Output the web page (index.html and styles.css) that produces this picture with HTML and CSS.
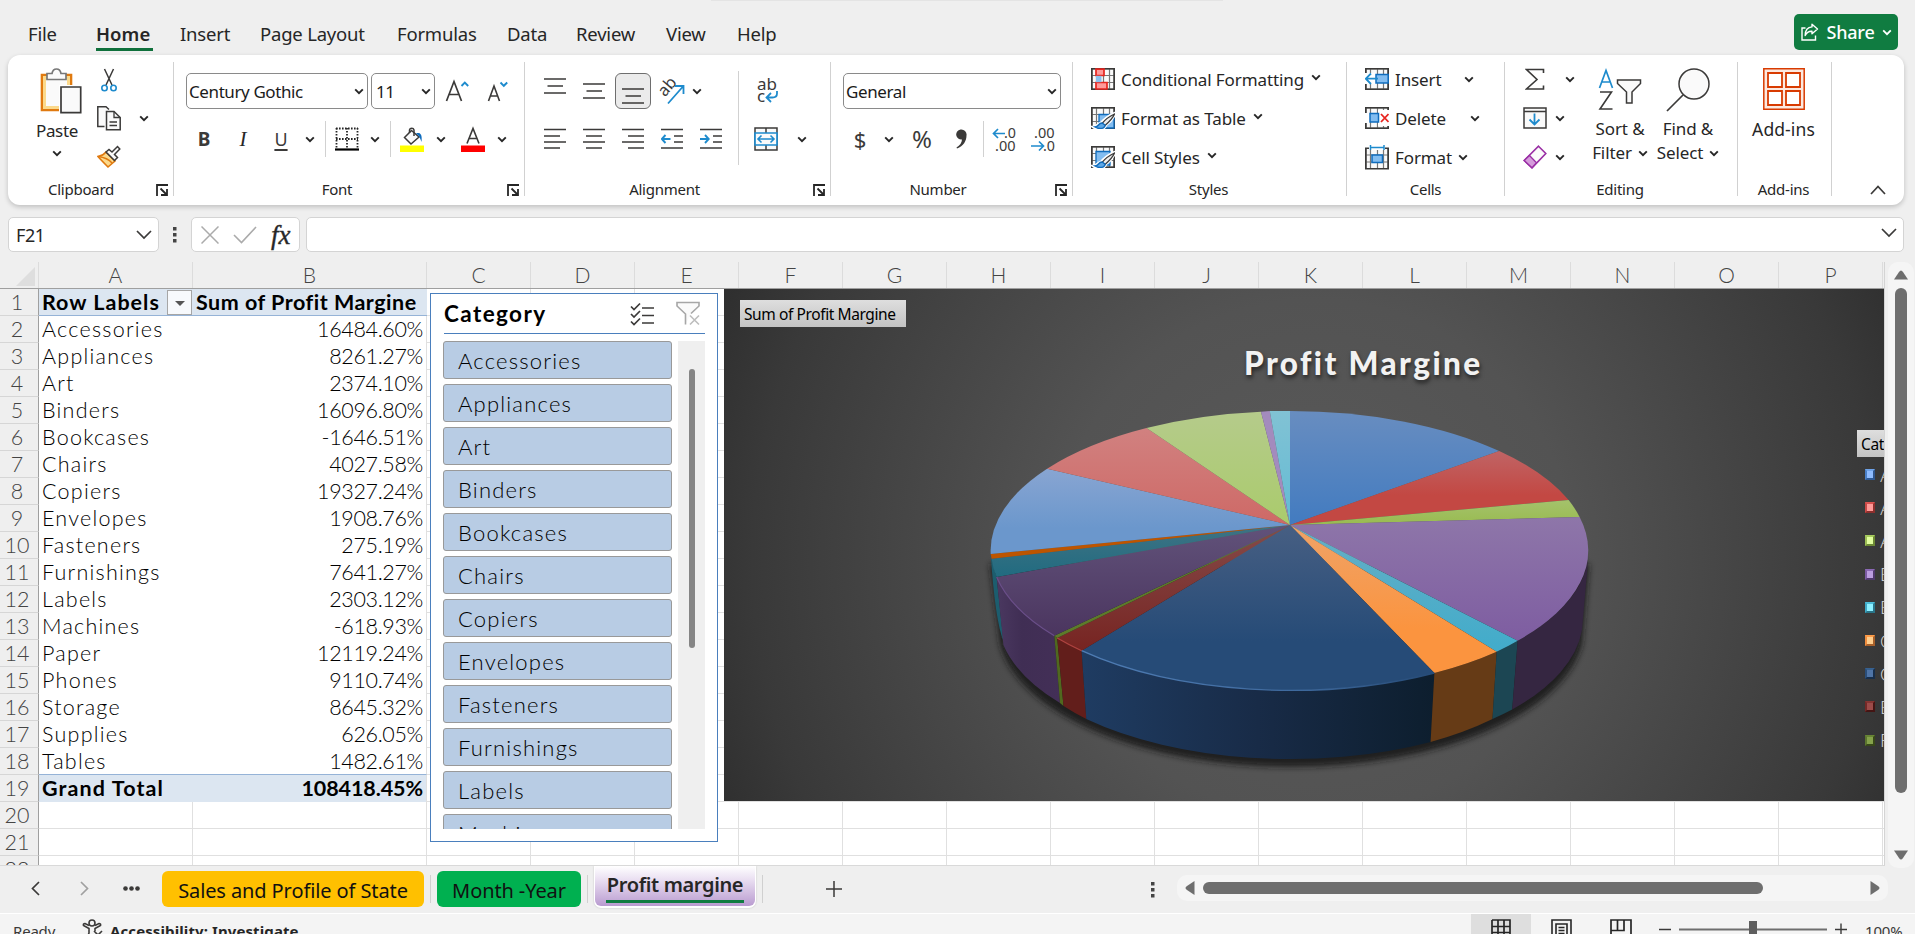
FILE: index.html
```html
<!DOCTYPE html>
<html lang="en">
<head>
<meta charset="utf-8">
<title>Profit margine</title>
<link rel="stylesheet" href="styles.css">
</head>
<body>
<svg class="defs" aria-hidden="true">
  <symbol id="chev" viewBox="0 0 10 7"><path d="M1.2 1.3 5 5.2 8.8 1.3" fill="none" stroke="#262626" stroke-width="1.9"/></symbol>
  <symbol id="launch" viewBox="0 0 12 12"><path d="M1 12V1H12M4.5 4.5l6 6M11 5v6H5" fill="none" stroke="#262626" stroke-width="1.8"/></symbol>
  <symbol id="grid" viewBox="0 0 24 22"><path d="M1 1H23V21H1ZM1 7.5H23M1 14.5H23M5.5 1V21M12.5 1V21M18.5 1V21" fill="#fafafa" stroke="#777" stroke-width="1.2"/><path d="M.8.8H23.2V21.2H.8Z" fill="none" stroke="#3b3a39" stroke-width="1.6"/></symbol>
  <symbol id="brush" viewBox="0 0 24 22"><path d="M24 6C18 8 12 13 10 16 7 16 6 20 2 20c4 3 12 3 13-2 4-3 8-8 9-12Z" fill="#fff" stroke="#fff" stroke-width="2.5"/><path d="M23.500 7C17 10 13 14 11 16.500l3 2C18 15 22 11 23.500 7Z" fill="#eee" stroke="#3b3a39" stroke-width="1.3"/><path d="M11 16c-4 0-3 4-7 4 4 2.500 10 2 10-2Z" fill="#5fa8e6" stroke="#0f6cbd" stroke-width="1.4"/></symbol>
</svg>

<div class="app">
  <header class="tabs">
    <nav class="tablist">
      <span class="tab t-file">File</span>
      <span class="tab t-home active">Home</span>
      <span class="tab t-insert">Insert</span>
      <span class="tab t-page">Page Layout</span>
      <span class="tab t-formulas">Formulas</span>
      <span class="tab t-data">Data</span>
      <span class="tab t-review">Review</span>
      <span class="tab t-view">View</span>
      <span class="tab t-help">Help</span>
    </nav>
    <div class="topline"></div>
    <button class="share">
      <svg width="18" height="18" viewBox="0 0 18 18" fill="none" stroke="#fff" stroke-width="1.4"><path d="M4.500 5H1V17H14.500V12.500"/><path d="M11 1.200 16.500 6 11 10.800V8.200C7.500 8 5.500 9.500 4.200 12.500 4.200 7.500 6.500 4.200 11 3.900Z" stroke-linejoin="round"/></svg>
      <span>Share</span>
      <svg width="10" height="7" viewBox="0 0 10 7"><path d="M1.200 1.300 5 5.200 8.800 1.300" fill="none" stroke="#fff" stroke-width="1.8"/></svg>
    </button>
  </header>

  <section class="ribbon">
    <div class="group g-clip">
      <div class="body clip">
        <div class="big paste">
          <svg width="42" height="46" viewBox="0 0 42 46"><path d="M2 7H31V42H2Z" fill="#fafafa" stroke="#e07a10" stroke-width="2.600"/><path d="M4.500 9.500H28.500V39.500H4.500Z" fill="none" stroke="#fbd98b" stroke-width="3"/><path d="M7 11.500V5.500H12C12.500 2.500 14 1 16.500 1S20.500 2.500 21 5.500H26V11.500Z" fill="#fafafa" stroke="#777" stroke-width="1.700"/><path d="M19 17H42V46H19Z" fill="#fff"/><path d="M21 19H40.700V44.700H21Z" fill="#fafafa" stroke="#3b3a39" stroke-width="1.700"/></svg>
          <span>Paste</span>
          <svg class="chev"><use href="#chev"/></svg>
        </div>
        <div class="col">
          <svg width="24" height="24" viewBox="0 0 24 24" fill="none"><path d="M7.500 1 15 17M16.500 1 9 17" stroke="#3b3a39" stroke-width="1.500"/><circle cx="7.500" cy="20" r="2.700" stroke="#1e8bcd" stroke-width="1.600"/><circle cx="16.500" cy="20" r="2.700" stroke="#1e8bcd" stroke-width="1.600"/></svg>
          <div class="copyrow">
            <svg width="24" height="25" viewBox="0 0 24 25" fill="#fafafa" stroke="#3b3a39" stroke-width="1.500"><path d="M7.500 20.500H.8V.8H9L12 3.500"/><path d="M9.500 5.500H17L23.200 11.500V23.700H9.500Z"/><path d="M17 5.500V11.500H23.200M12.500 16H20M12.500 19.500H20" fill="none" stroke-width="1.300"/></svg>
            <svg class="chev"><use href="#chev"/></svg>
          </div>
          <svg width="24" height="24" viewBox="0 0 24 24"><path d="M9 7 18 16 11 22C8 19 4 15 1 11.500 4 11 7 9.500 9 7Z" fill="#fbd98b" stroke="#e07a10" stroke-width="1.600"/><path d="M1 11.500C5 12 11 13 15 18" fill="none" stroke="#e07a10" stroke-width="1.400"/><path d="M9 7 12 4.500 15 7 20.500 1.500 22.800 4 17.500 9.500 20.500 12.500 17.500 15.500Z" fill="#fafafa" stroke="#3b3a39" stroke-width="1.500"/></svg>
        </div>
      </div>
      <div class="label"><span>Clipboard</span><svg class="launch"><use href="#launch"/></svg></div>
    </div>
    <i class="vsep"></i>

    <div class="group g-font">
      <div class="body rows">
        <div class="row fontrow">
          <div class="combo fontname"><span>Century Gothic</span><svg class="chev"><use href="#chev"/></svg></div>
          <div class="combo fontsize"><span>11</span><svg class="chev"><use href="#chev"/></svg></div>
          <svg class="grow" width="24" height="24" viewBox="0 0 24 24" fill="none"><path d="M1.500 22 9 2.500 16.500 22M4.200 15.500H13.800" stroke="#3b3a39" stroke-width="1.700"/><path d="M16.500 7 19.800 3.600 23.200 7" stroke="#1e8bcd" stroke-width="1.900"/></svg>
          <svg class="shrink" width="21" height="24" viewBox="0 0 21 24" fill="none"><path d="M1.500 22 7 7 12.500 22M3.500 17H10.500" stroke="#3b3a39" stroke-width="1.600"/><path d="M13.500 3.500 16.800 6.800 20.200 3.500" stroke="#1e8bcd" stroke-width="1.900"/></svg>
        </div>
        <div class="row slots s-font">
          <b class="fb">B</b><i class="fi">I</i><u class="fu">U</u><svg class="chev"><use href="#chev"/></svg>
          <span class="rsep"></span>
          <svg width="24" height="24" viewBox="0 0 24 24" fill="none" stroke="#262626"><path d="M1 1.500H23M1 12H23" stroke-width="1.800" stroke-dasharray="1.600 1.400"/><path d="M1.500 1V21M12 1V21M22.500 1V21" stroke-width="1.800" stroke-dasharray="1.600 1.400"/><path d="M0 22.500H24" stroke="#000" stroke-width="2.200"/></svg>
          <svg class="chev"><use href="#chev"/></svg><span class="rsep"></span>
          <svg width="24" height="26" viewBox="0 0 24 26"><path d="M11.500 4.500 19 11 11 18 4.500 11.500Z" fill="#fafafa" stroke="#3b3a39" stroke-width="1.500"/><path d="M9.500 7V4A2.300 2.300 0 0 1 14 4V10" fill="none" stroke="#3b3a39" stroke-width="1.500"/><path d="M16 7.500C20 6 22.500 8 21.500 16 20 12 19.500 10 16 7.500Z" fill="#0f6cbd"/><path d="M0 19.500H24V26H0Z" fill="#ff0"/></svg>
          <svg class="chev"><use href="#chev"/></svg>
          <svg width="24" height="26" viewBox="0 0 24 26"><path d="M6 17.500 12 2.500 18 17.500M8.200 12.500H15.800" fill="none" stroke="#3b3a39" stroke-width="1.600"/><path d="M0 19.500H24V26H0Z" fill="#f00"/></svg>
          <svg class="chev"><use href="#chev"/></svg>
        </div>
      </div>
      <div class="label"><span>Font</span><svg class="launch"><use href="#launch"/></svg></div>
    </div>
    <i class="vsep"></i>

    <div class="group g-align">
      <div class="body alignbody">
        <div class="rows">
          <div class="row slots s-align">
            <svg class="ln up" width="22" height="22" viewBox="0 0 22 22"><path d="M0 4H22M3.500 11H19M0 18H22"/></svg>
            <svg class="ln" width="22" height="22" viewBox="0 0 22 22"><path d="M0 4H22M3.500 11H19M0 18H22"/></svg>
            <span class="pressed"><svg class="ln" width="22" height="22" viewBox="0 0 22 22"><path d="M0 4H22M3.500 11H19M0 18H22"/></svg></span>
            <svg class="orient" width="26" height="28" viewBox="0 0 26 28"><text class="ic" transform="translate(6 20.500) rotate(-50)" font-size="16.500">ab</text><path d="M9 26.500 24 9.500M16 9H24.500V17" fill="none" stroke="#1e8bcd" stroke-width="1.800"/></svg>
            <svg class="chev"><use href="#chev"/></svg>
          </div>
          <div class="row slots s-align2">
            <svg class="ln" width="22" height="22" viewBox="0 0 22 22"><path d="M0 1.500H22M0 8H16M0 14H22M0 20H16"/></svg>
            <svg class="ln" width="22" height="22" viewBox="0 0 22 22"><path d="M0 1.500H22M3 8H19M0 14H22M3 20H19"/></svg>
            <svg class="ln" width="22" height="22" viewBox="0 0 22 22"><path d="M0 1.500H22M6 8H22M0 14H22M6 20H22"/></svg>
            <svg class="ln" width="22" height="22" viewBox="0 0 22 22"><path d="M0 1.500H22M13 8H22M13 14H22M0 20H22"/><path class="bl" d="M9.500 11H1M4.500 7 .8 11 4.500 15"/></svg>
            <svg class="ln" width="22" height="22" viewBox="0 0 22 22"><path d="M0 1.500H22M13 8H22M13 14H22M0 20H22"/><path class="bl" d="M0 11H8.500M5 7 8.700 11 5 15"/></svg>
          </div>
        </div>
        <i class="midsep"></i>
        <div class="rows wrapcol">
          <div class="row"><svg class="wrap" width="22" height="28" viewBox="0 0 22 28"><text class="ic" x="0" y="13" font-size="17">ab</text><text class="ic" x="0" y="25" font-size="17">c</text><path d="M20 14V16.500Q20 20.500 15.500 20.500H9.500M14 16 9.500 20.500 14 25" fill="none" stroke="#1e8bcd" stroke-width="1.800"/></svg></div>
          <div class="row"><svg width="24" height="24" viewBox="0 0 24 24"><path d="M1 1H23V23H1ZM12 1V6M12 18V23" fill="#fafafa" stroke="#3b3a39" stroke-width="1.500"/><path d="M1 6H23V18H1Z" fill="#fafafa" stroke="#1e8bcd" stroke-width="1.700"/><path d="M4 12H20M7.500 8.500 4 12 7.500 15.500M16.500 8.500 20 12 16.500 15.500" fill="none" stroke="#1e8bcd" stroke-width="1.600"/></svg><svg class="chev mergechev"><use href="#chev"/></svg></div>
        </div>
      </div>
      <div class="label"><span>Alignment</span><svg class="launch"><use href="#launch"/></svg></div>
    </div>
    <i class="vsep"></i>

    <div class="group g-num">
      <div class="body rows">
        <div class="row numrow"><div class="combo general"><span>General</span><svg class="chev"><use href="#chev"/></svg></div></div>
        <div class="row slots s-num">
          <span class="dollar">$</span><svg class="chev"><use href="#chev"/></svg><span class="pct">%</span>
          <svg width="12" height="20" viewBox="0 0 12 20"><path d="M5.500.5A5.200 5.200 0 0 1 11.500 6.500C11.500 12 8.500 17 2 19.500L1.500 18.500C5 16.500 6.800 13.500 7 10.500A5 5 0 1 1 5.500.5Z" fill="#3b3a39"/></svg>
          <span class="rsep"></span>
          <svg width="24" height="28" viewBox="0 0 24 28"><text class="ic" x="12" y="13" font-size="15" textLength="12" lengthAdjust="spacingAndGlyphs">.0</text><text class="ic" x="3" y="26" font-size="15" textLength="20.500" lengthAdjust="spacingAndGlyphs">.00</text><path d="M13 8.500H1.500M6 4 1.500 8.500 6 13" fill="none" stroke="#1e8bcd" stroke-width="1.700"/></svg>
          <svg width="24" height="28" viewBox="0 0 24 28"><text class="ic" x="3" y="13" font-size="15" textLength="20.500" lengthAdjust="spacingAndGlyphs">.00</text><text class="ic" x="12" y="26" font-size="15" textLength="12" lengthAdjust="spacingAndGlyphs">.0</text><path d="M0 21H12.500M8 16.500 12.500 21 8 25.500" fill="none" stroke="#1e8bcd" stroke-width="1.700"/></svg>
        </div>
      </div>
      <div class="label"><span>Number</span><svg class="launch"><use href="#launch"/></svg></div>
    </div>
    <i class="vsep"></i>

    <div class="group g-styles">
      <div class="body cmds">
        <div class="cmd"><svg width="24" height="22"><use href="#grid"/><path d="M5 1.200H13V7.500H5ZM5 14.500H16V21H5Z" fill="#ff9a9a" stroke="#e8251f" stroke-width="1.700"/><path d="M5 7.800H10.500V14.200H5Z" fill="#8cc1ee"/></svg><span>Conditional Formatting</span><svg class="chev"><use href="#chev"/></svg></div>
        <div class="cmd"><svg width="24" height="22"><use href="#grid"/><path d="M8 7.500H23V21H8Z" fill="#83bdf0" stroke="#0f6cbd" stroke-width="1.300"/><use href="#brush"/></svg><span>Format as Table</span><svg class="chev"><use href="#chev"/></svg></div>
        <div class="cmd"><svg width="24" height="22"><use href="#grid"/><path d="M5 5.500H19V19H5Z" fill="#83bdf0" stroke="#0f6cbd" stroke-width="1.300"/><use href="#brush"/></svg><span>Cell Styles</span><svg class="chev"><use href="#chev"/></svg></div>
      </div>
      <div class="label"><span>Styles</span></div>
    </div>
    <i class="vsep"></i>

    <div class="group g-cells">
      <div class="body cmds">
        <div class="cmd"><svg width="24" height="22"><use href="#grid"/><path d="M0 5H11V16H0Z" fill="#fff"/><path d="M11 6.500H23.200V15H11Z" fill="#83bdf0" stroke="#0f6cbd" stroke-width="1.500"/><path d="M13 10.700H1M6 5.500.8 10.700 6 16" fill="none" stroke="#1e8bcd" stroke-width="1.800"/></svg><span class="w-ins">Insert</span><svg class="chev"><use href="#chev"/></svg></div>
        <div class="cmd"><svg width="24" height="22"><use href="#grid"/><path d="M0 6H5V16H0ZM13 3H24V19H13Z" fill="#fff"/><path d="M5 6.500H13.500V15H5Z" fill="#83bdf0" stroke="#0f6cbd" stroke-width="1.500"/><path d="M16 7 23.500 15M23.500 7 16 15" fill="none" stroke="#e8251f" stroke-width="1.800"/></svg><span class="w-del">Delete</span><svg class="chev"><use href="#chev"/></svg></div>
        <div class="cmd"><svg width="24" height="25" viewBox="0 0 24 25"><use href="#grid" y="2" width="24" height="23"/><path d="M4 0H20V5H4Z" fill="#fff"/><path d="M7 10H17.500V17.500H7Z" fill="#83bdf0" stroke="#0f6cbd" stroke-width="1.500"/><path d="M5.500 0V5M19 0V5M5.500 2.500H19" stroke="#1e8bcd" stroke-width="1.500"/></svg><span>Format</span><svg class="chev"><use href="#chev"/></svg></div>
      </div>
      <div class="label"><span>Cells</span></div>
    </div>
    <i class="vsep"></i>

    <div class="group g-edit">
      <div class="body editbody">
        <div class="cmds edits">
          <div class="cmd sum"><svg width="20" height="23" viewBox="0 0 20 23"><path d="M18.500 5V1.500H1.500L12 11.500 1.500 21H18.500V17.500" fill="none" stroke="#3b3a39" stroke-width="1.600"/></svg><svg class="chev"><use href="#chev"/></svg></div>
          <div class="cmd"><svg width="24" height="22" viewBox="0 0 24 22"><path d="M1 1H23V21H1ZM1 4.500H23" fill="#fafafa" stroke="#3b3a39" stroke-width="1.500"/><path d="M11.500 6.500V17M6.500 12.500 11.500 17.500 16.500 12.500" fill="none" stroke="#1e8bcd" stroke-width="1.800"/></svg><svg class="chev"><use href="#chev"/></svg></div>
          <div class="cmd"><svg width="24" height="24" viewBox="0 0 24 24"><path d="M15.500 1.200 22.800 8.500 9 22.800 1.200 15.500Z" fill="#fafafa" stroke="#9a2fa5" stroke-width="1.600"/><path d="M6.500 10.500 13.500 17.800 9 22.800 1.200 15.500Z" fill="#d59bdb" stroke="#9a2fa5" stroke-width="1.300"/></svg><svg class="chev"><use href="#chev"/></svg></div>
        </div>
        <div class="big sort">
          <svg width="44" height="44" viewBox="0 0 44 44"><path d="M1.500 20 8 2.500 14.500 20M3.800 14H12.200" fill="none" stroke="#1e8bcd" stroke-width="1.700"/><path d="M2 24H13.500L2 41H14.500" fill="none" stroke="#3b3a39" stroke-width="1.600"/><path d="M19.500 12H42.500V15.500L34 24V35H28.500V24L19.500 15.500Z" fill="#fafafa" stroke="#3b3a39" stroke-width="1.500"/></svg>
          <span>Sort &amp;</span>
          <span class="lo">Filter <svg class="chev"><use href="#chev"/></svg></span>
        </div>
        <div class="big find">
          <svg width="44" height="44" viewBox="0 0 44 44"><circle cx="28" cy="16" r="15" fill="#fafafa" stroke="#3b3a39" stroke-width="1.500"/><path d="M17 27 1 43" stroke="#3b3a39" stroke-width="1.700"/></svg>
          <span>Find &amp;</span>
          <span class="lo">Select <svg class="chev"><use href="#chev"/></svg></span>
        </div>
      </div>
      <div class="label"><span>Editing</span></div>
    </div>
    <i class="vsep"></i>

    <div class="group g-add">
      <div class="body">
        <div class="big addins">
          <svg width="42" height="42" viewBox="0 0 42 42" fill="none" stroke="#d83b01" stroke-width="1.500"><path d="M.8.8H41.200V41.200H.8Z" fill="#fce9e0"/><path d="M5 5H19V19H5ZM23 5H37V19H23ZM5 23H19V37H5ZM23 23H37V37H23Z" fill="#fff" stroke-width="1.800"/></svg>
          <span>Add-ins</span>
        </div>
      </div>
      <div class="label"><span>Add-ins</span></div>
    </div>
    <i class="vsep"></i>
    <svg class="collapse" width="16" height="10" viewBox="0 0 16 10"><path d="M1 9 8 1.500 15 9" fill="none" stroke="#3b3a39" stroke-width="1.700"/></svg>
  </section>

  <section class="formula">
    <div class="namebox"><span>F21</span><svg width="16" height="10" viewBox="0 0 16 10"><path d="M1 1 8 8 15 1" fill="none" stroke="#3b3a39" stroke-width="1.700"/></svg></div>
    <svg class="dots" width="4" height="16" viewBox="0 0 4 16"><path d="M0 0H3.500V3.500H0ZM0 6H3.500V9.500H0ZM0 12H3.500V15.500H0Z" fill="#444"/></svg>
    <div class="fxbox">
      <svg width="18" height="18" viewBox="0 0 18 18"><path d="M.5.5 17.500 17.500M17.500.5.5 17.500" stroke="#ababab" stroke-width="1.500"/></svg>
      <svg width="24" height="18" viewBox="0 0 24 18"><path d="M1 9 8.500 16.500 23 1" fill="none" stroke="#ababab" stroke-width="1.600"/></svg>
      <span class="fx">fx</span>
    </div>
    <div class="input"><svg width="16" height="10" viewBox="0 0 16 10"><path d="M1 1 8 8 15 1" fill="none" stroke="#3b3a39" stroke-width="1.700"/></svg></div>
  </section>

  <main class="sheetwrap">
    <div class="sheet">
      <div class="heads">
        <span class="corner"><svg width="19" height="19" viewBox="0 0 19 19"><path d="M19 0V19H0Z" fill="#dedede"/></svg></span>
        <span>A</span><span>B</span><span>C</span><span>D</span><span>E</span><span>F</span><span>G</span><span>H</span><span>I</span><span>J</span><span>K</span><span>L</span><span>M</span><span>N</span><span>O</span><span>P</span>
      </div>
      <div class="gridarea">
        <div class="pivot">
          <div class="pr hd"><i>1</i><span class="rl">Row Labels<em class="drop"></em></span><span class="sm">Sum of Profit Margine</span></div>
          <div class="pr"><i>2</i><span>Accessories</span><span>16484.60%</span></div>
          <div class="pr"><i>3</i><span>Appliances</span><span>8261.27%</span></div>
          <div class="pr"><i>4</i><span>Art</span><span>2374.10%</span></div>
          <div class="pr"><i>5</i><span>Binders</span><span>16096.80%</span></div>
          <div class="pr"><i>6</i><span>Bookcases</span><span>-1646.51%</span></div>
          <div class="pr"><i>7</i><span>Chairs</span><span>4027.58%</span></div>
          <div class="pr"><i>8</i><span>Copiers</span><span>19327.24%</span></div>
          <div class="pr"><i>9</i><span>Envelopes</span><span>1908.76%</span></div>
          <div class="pr"><i>10</i><span>Fasteners</span><span>275.19%</span></div>
          <div class="pr"><i>11</i><span>Furnishings</span><span>7641.27%</span></div>
          <div class="pr"><i>12</i><span>Labels</span><span>2303.12%</span></div>
          <div class="pr"><i>13</i><span>Machines</span><span>-618.93%</span></div>
          <div class="pr"><i>14</i><span>Paper</span><span>12119.24%</span></div>
          <div class="pr"><i>15</i><span>Phones</span><span>9110.74%</span></div>
          <div class="pr"><i>16</i><span>Storage</span><span>8645.32%</span></div>
          <div class="pr"><i>17</i><span>Supplies</span><span>626.05%</span></div>
          <div class="pr last"><i>18</i><span>Tables</span><span>1482.61%</span></div>
          <div class="pr tot"><i>19</i><span>Grand Total</span><span>108418.45%</span></div>
          <div class="pr blank"><i>20</i><span></span><span></span></div>
          <div class="pr blank"><i>21</i><span></span><span></span></div>
          <div class="pr blank"><i>22</i><span></span><span></span></div>
        </div>
        <div class="cells"></div>

        <div class="slicer">
          <div class="shead"><span>Category</span>
            <svg class="multi" width="24" height="24" viewBox="0 0 24 24" fill="none"><path d="M1 4.500 4 7.500 10 1.500M1 12 4 15 10 9M1 19.500 4 22.500 10 16.500" stroke="#3b3a39" stroke-width="1.700"/><path d="M12 6H24M12 13.500H24M12 21H24" stroke="#3b3a39" stroke-width="1.700"/></svg>
            <svg width="24" height="25" viewBox="0 0 24 25" fill="none"><path d="M9.500 23.500V13L1 5V1.500H23V5L15 12.500" fill="#fafafa" stroke="#a6a6a6" stroke-width="1.600"/><path d="M14 14.500 23 23.500M23 14.500 14 23.500" stroke="#bdbdbd" stroke-width="1.600"/></svg>
          </div>
          <div class="sbody">
            <div class="items">
              <div>Accessories</div><div>Appliances</div><div>Art</div><div>Binders</div><div>Bookcases</div><div>Chairs</div><div>Copiers</div><div>Envelopes</div><div>Fasteners</div><div>Furnishings</div><div>Labels</div><div>Machines</div>
            </div>
            <div class="strack"><div class="sthumb"></div></div>
          </div>
        </div>

        <div class="chart">
          <span class="field">Sum of Profit Margine</span>
          <div class="ctitle">Profit Margine</div>
          <svg class="pie" width="640" height="400" viewBox="970 390 640 400">
            <defs>
              <filter id="soft" x="-10%" y="-10%" width="120%" height="120%"><feGaussianBlur stdDeviation="3"/></filter>
              <linearGradient id="c1" x2="0" y2="1"><stop stop-color="#688dc0"/><stop offset="1" stop-color="#427bc0"/></linearGradient>
              <linearGradient id="c2" x2="0" y2="1"><stop stop-color="#c06465"/><stop offset=".6" stop-color="#c34843"/><stop offset="1" stop-color="#c34843"/></linearGradient>
              <linearGradient id="c3" x2="0" y2="1"><stop stop-color="#a4c26c"/><stop offset="1" stop-color="#99bb50"/></linearGradient>
              <linearGradient id="c4" x2="0" y2="1"><stop stop-color="#8e76a9"/><stop offset="1" stop-color="#7e5da1"/></linearGradient>
              <linearGradient id="c5" x2="0" y2="1"><stop stop-color="#66aec4"/><stop offset="1" stop-color="#41accb"/></linearGradient>
              <linearGradient id="c6" x2="0" y2="1"><stop stop-color="#efa368"/><stop offset=".7" stop-color="#fb943f"/><stop offset="1" stop-color="#fb943f"/></linearGradient>
              <linearGradient id="c7" x2="0" y2="1"><stop stop-color="#475f83"/><stop offset=".7" stop-color="#264b77"/><stop offset="1" stop-color="#264b77"/></linearGradient>
              <linearGradient id="c8" x2="0" y2="1"><stop stop-color="#854b4a"/><stop offset="1" stop-color="#772421"/></linearGradient>
              <linearGradient id="c10" x2="0" y2="1"><stop stop-color="#61527a"/><stop offset="1" stop-color="#4b355f"/></linearGradient>
              <linearGradient id="c11" x2="0" y2="1"><stop stop-color="#3f7384"/><stop offset="1" stop-color="#216b80"/></linearGradient>
              <linearGradient id="c13" x2="0" y2="1"><stop stop-color="#88a5d2"/><stop offset=".7" stop-color="#6b97cc"/><stop offset="1" stop-color="#6b97cc"/></linearGradient>
              <linearGradient id="c14" x2="0" y2="1"><stop stop-color="#d18180"/><stop offset="1" stop-color="#ce6966"/></linearGradient>
              <linearGradient id="c15" x2="0" y2="1"><stop stop-color="#b5cb8b"/><stop offset="1" stop-color="#aacb6c"/></linearGradient>
              <linearGradient id="c17" x2="0" y2="1"><stop stop-color="#81c2d4"/><stop offset="1" stop-color="#63bbd4"/></linearGradient>
              <linearGradient id="s7"><stop stop-color="#1f3c62"/><stop offset=".5" stop-color="#182b47"/><stop offset="1" stop-color="#0d1e2e"/></linearGradient>
              <linearGradient id="s10"><stop stop-color="#4a3860"/><stop offset=".4" stop-color="#402e54"/><stop offset="1" stop-color="#432f57"/></linearGradient>
              <linearGradient id="rim"><stop stop-color="#4f7db5"/><stop offset=".6" stop-color="#3f6a9e"/><stop offset="1" stop-color="#264b77"/></linearGradient>
            </defs>
            <path d="M990 560L1000 640A293 139 0 0 0 1582 640L1589 560Z" fill="#151515" opacity=".85" filter="url(#soft)" transform="translate(0 4)"/>
            <path d="M990.700 554L991.600 558.700 996.600 577 1003.400 641Q995 620 990.700 554Z" fill="#1c5d6e"/>
            <path d="M996.600 577A299 140 0 0 0 1054.300 635.700L1060 703A291 139 0 0 1 1003.400 645Z" fill="url(#s10)"/>
            <path d="M1054.300 635.700 1057.200 638 1063.500 706 1060 703Z" fill="#50681f"/>
            <path d="M1057.200 638A299 140 0 0 0 1081.600 650.700L1086.300 719A291 139 0 0 1 1063.500 706Z" fill="#621e1b"/>
            <path d="M1081.600 650.700A299 140 0 0 0 1434.400 673L1430.600 742A291 139 0 0 1 1086.300 719Z" fill="url(#s7)"/>
            <path d="M1434.400 673A299 140 0 0 0 1496.700 651.700L1492.500 719A291 139 0 0 1 1430.600 742Z" fill="#663b16"/>
            <path d="M1496.700 651.700A299 140 0 0 0 1517.700 640.700L1512.200 709.500A291 139 0 0 1 1492.500 719Z" fill="#1c4653"/>
            <path d="M1517.700 640.700A299 140 0 0 0 1588.500 555L1582 630A291 139 0 0 1 1512.200 709.500Z" fill="#352641"/>
            <path d="M1290 525 1290 411A299 140 0 0 1 1499.200 451Z" fill="url(#c1)"/>
            <path d="M1290 525 1499.200 451A299 140 0 0 1 1568.600 500Z" fill="url(#c2)"/>
            <path d="M1290 525 1568.600 500A299 140 0 0 1 1579.600 517Z" fill="url(#c3)"/>
            <path d="M1290 525 1579.600 517A299 140 0 0 1 1517.700 640.700Z" fill="url(#c4)"/>
            <path d="M1290 525 1517.700 640.700A299 140 0 0 1 1496.700 651.700Z" fill="url(#c5)"/>
            <path d="M1290 525 1496.700 651.700A299 140 0 0 1 1434.400 673Z" fill="url(#c6)"/>
            <path d="M1290 525 1434.400 673A299 140 0 0 1 1081.600 650.700Z" fill="url(#c7)"/>
            <path d="M1290 525 1081.600 650.700A299 140 0 0 1 1057.200 638Z" fill="url(#c8)"/>
            <path d="M1290 525 1057.200 638 1054.300 635.700Z" fill="#5d7a2a"/>
            <path d="M1290 525 1054.300 635.700A299 140 0 0 1 996.600 577Z" fill="url(#c10)"/>
            <path d="M1290 525 996.600 577A299 140 0 0 1 991.600 558.700Z" fill="url(#c11)"/>
            <path d="M1290 525 991.600 558.700 990.700 554Z" fill="#bd5500"/>
            <path d="M1290 525 990.700 554A299 140 0 0 1 1047.100 468.700Z" fill="url(#c13)"/>
            <path d="M1290 525 1047.100 468.700A299 140 0 0 1 1146.500 428Z" fill="url(#c14)"/>
            <path d="M1290 525 1146.500 428A299 140 0 0 1 1261 411.700Z" fill="url(#c15)"/>
            <path d="M1290 525 1261 411.700 1269.800 411Z" fill="#a38bbd"/>
            <path d="M1290 525 1269.800 411 1290 411Z" fill="url(#c17)"/>
            <path d="M1081.600 650.700A299 140 0 0 0 1434.400 673" fill="none" stroke="url(#rim)" stroke-width="1.300"/>
            <path d="M996.600 577A299 140 0 0 0 1054.300 635.700" fill="none" stroke="#6b4f8a" stroke-width="1.200"/>
            <path d="M1057.200 638A299 140 0 0 0 1081.600 650.700" fill="none" stroke="#b04441" stroke-width="1.200"/>
          </svg>
          <div class="legend">
            <span class="field catfield">Category</span>
            <ul>
              <li class="k1"><i></i>Accessories</li><li class="k2"><i></i>Appliances</li><li class="k3"><i></i>Art</li><li class="k4"><i></i>Binders</li><li class="k5"><i></i>Bookcases</li><li class="k6"><i></i>Chairs</li><li class="k7"><i></i>Copiers</li><li class="k8"><i></i>Envelopes</li><li class="k9"><i></i>Fasteners</li>
            </ul>
          </div>
        </div>
      </div>
    </div>
    <div class="vscroll">
      <svg width="14" height="10" viewBox="0 0 14 10"><path d="M7 0.500Q8 .5 9 2L14 9.500H0L5 2Q6 .5 7 .5Z" fill="#6e6e6e"/></svg>
      <div class="vthumb"></div>
      <svg width="14" height="10" viewBox="0 0 14 10"><path d="M7 9.500Q8 9.500 9 8L14 .5H0L5 8Q6 9.500 7 9.500Z" fill="#6e6e6e"/></svg>
    </div>
  </main>

  <footer class="sheettabs">
    <svg class="prev" width="9" height="15" viewBox="0 0 9 15"><path d="M8 1 1.500 7.500 8 14" fill="none" stroke="#3b3a39" stroke-width="1.700"/></svg>
    <svg class="next" width="9" height="15" viewBox="0 0 9 15"><path d="M1 1 7.500 7.500 1 14" fill="none" stroke="#a0a0a0" stroke-width="1.700"/></svg>
    <svg class="more" width="17" height="5" viewBox="0 0 17 5"><circle cx="2.500" cy="2.500" r="2.300" fill="#3b3a39"/><circle cx="8.500" cy="2.500" r="2.300" fill="#3b3a39"/><circle cx="14.500" cy="2.500" r="2.300" fill="#3b3a39"/></svg>
    <span class="st st1">Sales and Profile of State</span><i class="tsep"></i>
    <span class="st st2">Month -Year</span><i class="tsep"></i>
    <span class="stx"><span class="st3"><span>Profit margine</span></span></span><i class="tsep ts3"></i>
    <svg class="plus" width="16" height="16" viewBox="0 0 16 16"><path d="M8 0V16M0 8H16" stroke="#3b3a39" stroke-width="1.500"/></svg>
    <svg class="hdots" width="4" height="16" viewBox="0 0 4 16"><path d="M0 0H3.500V3.500H0ZM0 6H3.500V9.500H0ZM0 12H3.500V15.500H0Z" fill="#444"/></svg>
    <div class="hscroll">
      <svg width="10" height="14" viewBox="0 0 10 14"><path d="M.5 7Q.5 6 2 5L9.500 0V14L2 9Q.5 8 .5 7Z" fill="#6e6e6e"/></svg>
      <div class="hthumb"></div>
      <svg width="10" height="14" viewBox="0 0 10 14"><path d="M9.500 7Q9.500 6 8 5L.5 0V14L8 9Q9.500 8 9.500 7Z" fill="#6e6e6e"/></svg>
    </div>
  </footer>
  <footer class="status">
    <span class="ready">Ready</span>
    <svg class="acc" width="22" height="22" viewBox="0 0 22 22" fill="none" stroke="#3b3a39" stroke-width="1.600"><circle cx="10" cy="4" r="3"/><path d="M7 6.500 3 4.500Q1 4.500 1.500 6.500L7 9.500V14L4.500 20M13 6.500 17 4.500Q19 4.500 18.500 6.500L13 9.500V12M12 12 20 20M20 12 12 20"/></svg>
    <b class="acct">Accessibility: Investigate</b>
    <span class="view on"><svg width="20" height="18" viewBox="0 0 20 18"><path d="M1 1H19V18M1 18V1M7 1V18M13 1V18M1 7.500H19M1 13.500H19" fill="none" stroke="#262626" stroke-width="1.700"/></svg></span>
    <span class="view"><svg width="21" height="18" viewBox="0 0 21 18"><path d="M1 18V1H20V18M5 18V5H16V18M7.500 8.500H13.500M7.500 11.500H13.500M7.500 14.500H13.500" fill="none" stroke="#262626" stroke-width="1.600"/></svg></span>
    <span class="view"><svg width="22" height="18" viewBox="0 0 22 18"><path d="M1 18V1H21V18M7.500 1V11.500H1M7.500 11.500H14V1" fill="none" stroke="#262626" stroke-width="1.700"/></svg></span>
    <svg class="zoombar" width="190" height="18" viewBox="0 0 190 18"><path d="M1 9.500H13M177 9.500H189M183 3.500V15.500" stroke="#3b3a39" stroke-width="1.400"/><path d="M21 9.500H169" stroke="#6e6e6e" stroke-width="2"/><path d="M91 1H99V18H91Z" fill="#5e5e5e"/></svg>
    <span class="pc">100%</span>
  </footer>
</div>
</body>
</html>
```
FILE: styles.css
```css
* { box-sizing: border-box; }
body { margin: 0; background: #efefef; color: #262626; font-family: "Noto Sans", "Open Sans", sans-serif; font-size: 17px; overflow: hidden; }
svg { display: block; flex: none; }
i { font-style: normal; }
.defs { position: absolute; width: 0; height: 0; }
.app { width: 1915px; height: 934px; overflow: hidden; display: flex; flex-direction: column; }
.chev { width: 10px; height: 7px; }
.launch { width: 12px; height: 12px; }
.ic { font-family: "Noto Sans", sans-serif; fill: #3b3a39; }

/* menu tabs */
.tabs { height: 55px; display: flex; position: relative; flex: none; }
.tablist { display: flex; padding-left: 28px; padding-top: 18px; }
.tab { height: 33px; line-height: 31px; font-size: 18.5px; letter-spacing: -.2px; white-space: nowrap; }
.t-file { width: 68px; }
.t-home { width: 57px; margin-right: 27px; font-weight: 600; letter-spacing: .1px; border-bottom: 3px solid #0f703b; }
.t-insert { width: 80px; }
.t-page { width: 137px; }
.t-formulas { width: 110px; }
.t-data { width: 69px; }
.t-review { width: 90px; }
.t-view { width: 71px; }
.topline { position: absolute; left: 711px; top: 0; width: 512px; height: 1px; background: #e4e4e4; }
.share { position: absolute; left: 1794px; top: 14px; width: 104px; height: 36px; border: 0; border-radius: 5px; background: #107c41; color: #fff; font: 500 18px "Noto Sans", sans-serif; letter-spacing: -.2px; display: flex; align-items: center; padding: 0 6px 0 7px; justify-content: space-between; }

/* ribbon */
.ribbon { width: 1896px; height: 150px; margin-left: 8px; background: #fff; border-radius: 12px; box-shadow: 0 2px 5px rgba(0,0,0,.2); display: flex; padding-top: 7px; flex: none; }
.vsep { width: 1px; height: 134px; background: #d1d1d1; flex: none; }
.group { height: 134px; display: flex; flex-direction: column; flex: none; }
.body { height: 120px; flex: none; }
.label { height: 14px; display: flex; align-items: center; justify-content: center; font-size: 15px; letter-spacing: -.25px; line-height: 14px; position: relative; }
.label .launch { position: absolute; right: 5px; top: 2px; }
.g-clip { width: 165px; } .g-font { width: 350px; } .g-align { width: 305px; } .g-num { width: 241px; }
.g-styles { width: 273px; } .g-cells { width: 157px; } .g-edit { width: 232px; } .g-add { width: 93px; }
.g-clip .label { padding-right: 19px; } .g-font .label { padding-right: 24px; } .g-align .label { padding-right: 26px; } .g-num .label { padding-right: 27px; }
.g-styles .label, .g-edit .label, .g-add .label { padding-right: 2px; }
.big { display: flex; flex-direction: column; align-items: center; font-size: 17px; letter-spacing: -.1px; line-height: 24px; padding-top: 6px; white-space: nowrap; }
.lo { display: flex; align-items: center; gap: 6px; }
.clip { display: flex; }
.paste { width: 76px; margin-left: 11px; }
.paste > svg:first-child { margin-left: 7px; }
.paste > span { margin-top: 5px; letter-spacing: -.3px; }
.paste .chev { margin-top: 7px; margin-right: 1px; }
.col { display: flex; flex-direction: column; gap: 14px; padding: 6px 0 0 2px; }
.copyrow { display: flex; align-items: center; gap: 18px; }
.rows { display: flex; flex-direction: column; gap: 12px; padding-top: 11px; }
.row { height: 36px; display: flex; align-items: center; }
.slots { display: grid; justify-items: center; }
.fontrow { padding-left: 12px; }
.combo { height: 36px; border: 1px solid #8a8a8a; border-radius: 5px; display: flex; align-items: center; justify-content: space-between; font-size: 17px; letter-spacing: -.4px; padding: 0 3px 0 2px; color: #1b1b1b; white-space: nowrap; }
.fontname { width: 182px; margin-right: 3px; } .fontsize { width: 64px; margin-right: 10px; padding-left: 4px; }
.grow { margin-right: 18px; }
.s-font { padding-left: 13px; grid-template-columns: 34px 44px 32px 26px 5px 37px 20px 11px 32px 25px 40px 17px; }
.rsep { width: 1px; height: 36px; background: #d1d1d1; }
.fb { font-size: 19px; color: #3b3a39; } .fi { font: italic 21px "Liberation Serif", serif; } .fu { font-size: 18px; text-underline-offset: 3px; text-decoration-thickness: 1.5px; color: #3b3a39; }
.alignbody { display: flex; }
.alignbody > .rows:first-child { width: 213px; }
.s-align { padding-left: 10px; grid-template-columns: 40px 38px 40px 38px 12px; }
.s-align2 { padding-left: 10px; grid-template-columns: 40px 38px 40px 38px 40px; }
.orient { overflow: visible; }
.ln path { stroke: #3b3a39; stroke-width: 1.7; fill: none; }
.ln .bl { stroke: #1e8bcd; stroke-width: 1.9; }
.ln.up { margin-bottom: 10px; }
.pressed { width: 36px; height: 36px; border: 1px solid #6e6e6e; border-radius: 6px; background: #ebebeb; display: flex; justify-content: center; align-items: flex-end; padding-bottom: 1px; }
.midsep { width: 1px; height: 94px; margin-top: 9px; background: #d1d1d1; }
.wrapcol { padding-left: 15px; }
.wrap { margin-left: 3px; }
.mergechev { margin-left: 19px; }
.numrow { padding-left: 12px; } .general { width: 218px; }
.s-num { padding-left: 15px; grid-template-columns: 28px 30px 36px 42px 2px 39px 39px; }
.dollar { font-size: 22px; } .pct { font-size: 24px; letter-spacing: 0; }
.dollar, .pct { color: #3b3a39; line-height: 36px; }
.cmds { display: flex; flex-direction: column; padding: 0 0 0 18px; }
.cmd { height: 39px; display: flex; align-items: center; gap: 6px; font-size: 17px; white-space: nowrap; padding-bottom: 5px; }
.body.cmds .cmd { letter-spacing: -.1px; }
.g-styles .cmd .chev { margin: 0 0 4px 1px; }
.w-ins { width: 63px; } .w-del { width: 69px; }
.editbody { display: flex; }
.edits { width: 80px; }
.edits .cmd { gap: 8px; }
.edits .sum { padding-left: 2px; gap: 20px; }
.sort { width: 68px; margin-left: 1px; } .find { width: 68px; }
.sort > svg, .find > svg { margin-bottom: 5px; }
.addins { padding-right: 2px; font-size: 17.5px; letter-spacing: .1px; }
.addins > svg { margin-bottom: 7px; }
.collapse { margin: 123px 0 0 38px; }

/* formula bar */
.formula { height: 57px; padding: 12px 0 0 8px; display: flex; flex: none; }
.formula > div { height: 35px; background: #fff; border: 1px solid #d4d4d4; border-radius: 5px; display: flex; align-items: center; }
.namebox { width: 151px; justify-content: space-between; padding: 0 6px 0 7px; font-size: 18px; letter-spacing: -.4px; }
.dots { margin: 10px 14px 0 14px; }
.fxbox { width: 109px; padding-left: 9px; gap: 14px; }
.fx { font: italic 27px "Liberation Serif", serif; line-height: 30px; -webkit-text-stroke: .4px #333; }
.input { width: 1598px; margin-left: 6px; justify-content: flex-end; padding-right: 6px; padding-bottom: 4px; }

/* sheet */
.sheetwrap { display: flex; height: 604px; flex: none; }
.sheet { width: 1885px; height: 604px; overflow: hidden; border-right: 1px solid #d4d4d4; border-bottom: 1px solid #d9d9d9; font-family: Lato, "Open Sans", sans-serif; font-weight: 300; }
.heads { display: grid; grid-template-columns: 39px 154px 234px repeat(14, 104px); height: 27px; border-bottom: 1px solid #9f9f9f; width: 1900px; }
.heads span { display: flex; justify-content: center; align-items: center; font-size: 21px; color: #444; border-right: 1px solid #dcdcdc; line-height: 26px; }
.heads .corner { justify-content: flex-end; padding: 2px 3px 0 0; }
.gridarea { position: relative; display: flex; width: 1885px; height: 600px; background: #fff; }
.pivot { width: 427px; flex: none; }
.pr { display: grid; grid-template-columns: 39px 154px 234px; height: 27px; font-size: 21.5px; color: #000; line-height: 27px; }
.pr > * { height: 27px; }
.pr i { background: #efefef; border-right: 1px solid #9f9f9f; border-bottom: 1px solid #d6d6d6; text-align: center; padding-right: 4px; color: #444; }
.pr span { padding: 0 0 0 3px; white-space: nowrap; letter-spacing: 1.25px; }
.pr span:last-child { text-align: right; padding: 0 3px 0 0; letter-spacing: -.35px; border-right: 1px solid #e0e0e0; }
.hd span, .tot span { background: #dce6f1; font-weight: 700; }
.tot span { letter-spacing: 1.1px; }
.pr.tot span:last-child { letter-spacing: -.1px; }
.pr.hd span { border-bottom: 1px solid #95b3d7; font-size: 21.5px; letter-spacing: 1px; }
.pr.hd .sm { text-align: left; padding-left: 3px; border-right: 0; letter-spacing: .5px; }
.pr.last span { border-bottom: 1px solid #95b3d7; }
.rl { position: relative; }
.drop { position: absolute; right: 1px; top: 1px; width: 25px; height: 25px; border: 1px solid #a6a6a6; background: #f7f9fc; }
.drop::after { content: ""; position: absolute; left: 7px; top: 10px; border: 5px solid transparent; border-top-color: #555; border-bottom: 0; }
.blank span { border-right: 1px solid #e0e0e0; border-bottom: 1px solid #e0e0e0; }
.cells { width: 1458px; background-image: linear-gradient(to left, #e0e0e0 1px, transparent 1px), linear-gradient(to top, #e0e0e0 1px, transparent 1px); background-size: 104px 27px; }

/* slicer */
.slicer { position: absolute; left: 430px; top: 4px; width: 288px; height: 549px; background: #fff; border: 1px solid #4a7fbd; padding: 0 12px; color: #000; }
.shead { height: 40px; border-bottom: 1px solid #4a7fbd; margin-left: 1px; display: flex; align-items: center; font-size: 22.5px; font-weight: 700; padding-right: 5px; }
.shead span { flex: 1; letter-spacing: 1.4px; }
.multi { margin-right: 22px; }
.sbody { display: flex; margin-top: 7px; height: 488px; overflow: hidden; }
.items { width: 229px; display: flex; flex-direction: column; gap: 5px; }
.items div { height: 38px; flex: none; background: #b8cce4; border: 1px solid #999; border-radius: 3px; padding-left: 14px; font-size: 22px; line-height: 37px; letter-spacing: 1.2px; }
.strack { width: 27px; margin-left: 6px; background: #efefef; padding: 28px 0 0 11px; }
.sthumb { width: 6px; height: 279px; border-radius: 3px; background: #858585; }

/* chart */
.chart { position: absolute; left: 724px; top: 0; width: 1161px; height: 512px; overflow: hidden; background: radial-gradient(circle 720px at 590px 270px, #5a5a5a, #535353 36%, #393939 78%, #262626); }
.field { position: absolute; left: 16px; top: 11px; width: 166px; height: 27px; background: linear-gradient(#dedede, #c3c3c3); color: #000; font: 400 15.5px/28px "Noto Sans", sans-serif; letter-spacing: -.4px; padding-left: 4px; white-space: nowrap; }
.ctitle { position: absolute; left: 520px; top: 56px; color: #f2f2f2; font-weight: 900; font-size: 31.5px; line-height: 36px; letter-spacing: 2.4px; text-shadow: 1px 3px 4px rgba(0,0,0,.6); white-space: nowrap; }
.pie { position: absolute; left: 246px; top: 101px; }
.legend { position: absolute; left: 1133px; top: 141px; }
.catfield { left: 0; top: 0; width: 90px; }
.legend ul { list-style: none; margin: 0; padding: 28px 0 0 8px; }
.legend li { height: 33.2px; display: flex; align-items: center; gap: 5px; color: #d9d9d9; font-size: 18px; white-space: nowrap; }
.legend i { width: 10px; height: 11px; border: 2px solid; }
.k1 i { background: #8fbcff; border-color: #6fa3e8 #2f558c #2f5a95 #4a80c8; }
.k2 i { background: #ff9a98; border-color: #d95350 #8c2f2d #8c2f2d #c84a47; }
.k3 i { background: #e2ff9f; border-color: #a8cc5f #6d8a35 #6d8a35 #9dbf56; }
.k4 i { background: #bb9de0; border-color: #8a68b4 #50396d #50396d #7b5aa3; }
.k5 i { background: #8df0ff; border-color: #4dbcd8 #2a7488 #2a7488 #3fa9c6; }
.k6 i { background: #ffce8d; border-color: #ff9d4a #a8602a #a8602a #f08d3e; }
.k7 i { background: #4f74a6; border-color: #38618f #182e4a #182e4a #2a4e7a; }
.k8 i { background: #9c4b49; border-color: #853533 #441514 #441514 #732927; }
.k9 i { background: #85a24b; border-color: #688535 #38481a #38481a #5c762e; }

.vscroll { width: 26px; height: 606px; margin-left: 3px; background: #f5f5f5; border-radius: 10px; display: flex; flex-direction: column; align-items: center; padding-top: 8px; flex: none; }
.vthumb { width: 12px; height: 505px; margin: 8px 0 57px; background: #6e6e6e; border-radius: 6px; flex: none; }

/* sheet tabs */
.sheettabs { height: 47px; display: flex; flex: none; }
.sheettabs > svg { margin-top: 15px; }
.prev { margin-left: 31px; } .next { margin-left: 40px; }
.sheettabs > .more { margin: 20px 0 0 34px; }
.st { height: 36px; margin-top: 5px; border-radius: 6px; color: #111; font-size: 20px; line-height: 39px; text-align: center; letter-spacing: -.1px; white-space: nowrap; }
.st1 { width: 262px; margin-left: 22px; background: #ffc000; }
.st2 { width: 144px; margin-left: 6px; background: #00b050; }
.tsep { width: 1px; height: 28px; margin: 9px 0 0 6px; background: #d0d0d0; }
.stx { width: 162px; height: 42px; margin-left: 6px; background: #fff; border-radius: 0 0 7px 7px; padding: 0 1px 2px; box-shadow: 0 0 2px rgba(0,0,0,.2); clip-path: inset(0 -3px -3px -3px); }
.st3 { display: flex; justify-content: center; height: 40px; border-radius: 0 0 6px 6px; background: linear-gradient(#fff, #e9def1 35%, #b99bd0); font-weight: 600; font-size: 20px; letter-spacing: -.35px; line-height: 38px; }
.st3 span { height: 37px; border-bottom: 3px solid #107c41; white-space: nowrap; width: 138px; text-align: center; }
.plus { margin-left: 63px; }
.sheettabs > .hdots { margin: 16px 0 0 309px; }
.hscroll { width: 711px; height: 26px; margin: 9px 0 0 22px; background: #f5f5f5; border-radius: 10px; display: flex; align-items: center; padding: 0 8px; }
.hthumb { width: 560px; height: 12px; border-radius: 6px; background: #6e6e6e; margin: 0 107px 0 8px; flex: none; }

/* status bar */
.status { height: 21px; border-top: 1px solid #fff; background: #f4f4f4; display: flex; overflow: hidden; flex: none; font-size: 15px; line-height: 34px; color: #3b3a39; }
.ready { width: 70px; padding-left: 13px; letter-spacing: -.2px; }
.acc { margin: 5px 6px 0 12px; }
.acct { width: 1361px; letter-spacing: .1px; color: #262626; }
.view { width: 60px; height: 21px; padding-top: 5px; display: flex; justify-content: center; flex: none; }
.view.on { background: #dedede; }
.zoombar { margin: 6px 0 0 7px; }
.pc { margin-left: 17px; letter-spacing: -.2px; }
```
